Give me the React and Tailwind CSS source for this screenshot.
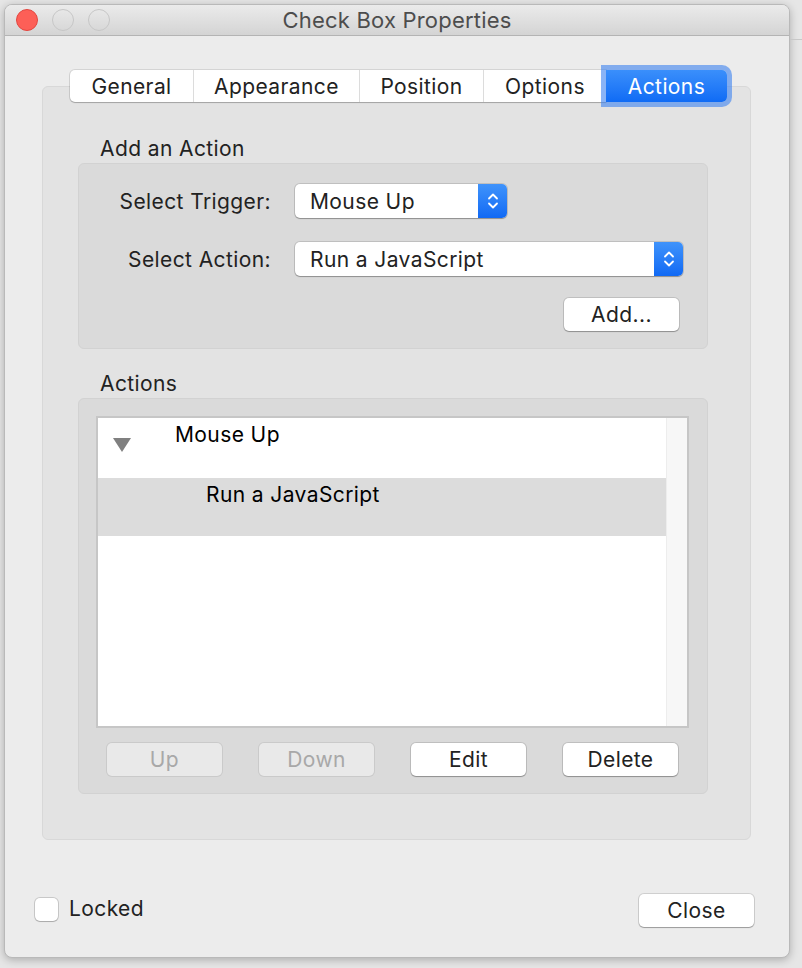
import React from "react";

const font = { fontFamily: "Inter, 'Liberation Sans', sans-serif" };

const Stepper = () => (
  <div className="w-[29px] h-full rounded-r-[5px] bg-gradient-to-b from-[#3f93fb] to-[#1069f4] flex items-center justify-center">
    <svg width="12" height="20" viewBox="0 0 12 20" fill="none" stroke="white" strokeWidth="1.8" strokeLinecap="round" strokeLinejoin="round">
      <path d="M2 7.5 L6 3.5 L10 7.5" />
      <path d="M2 12.5 L6 16.5 L10 12.5" />
    </svg>
  </div>
);

const Popup = ({ value, width }) => (
  <div
    className={`${width} h-[34px] flex bg-white rounded-[5px] shadow-[0_0_0_1px_rgba(0,0,0,0.12),0_1px_1px_rgba(0,0,0,0.25)]`}
  >
    <div className="flex-1 pl-[15px] pt-[1px] flex items-center text-[21px] tracking-[0.4px] text-[#222]">{value}</div>
    <Stepper />
  </div>
);

const Button = ({ label, disabled }) => (
  <div
    className={
      "w-[115px] h-[33px] pt-[1px] rounded-[5px] flex items-center justify-center text-[21px] tracking-[0.4px] " +
      (disabled
        ? "bg-[#e9e9e9] text-[#a8a8a8] shadow-[0_0_0_1px_rgba(0,0,0,0.07)]"
        : "bg-white text-[#222] shadow-[0_0_0_1px_rgba(0,0,0,0.12),0_1px_1px_rgba(0,0,0,0.25)]")
    }
  >
    {label}
  </div>
);

const tabs = [
  { label: "General", w: "w-[123px]" },
  { label: "Appearance", w: "w-[166px]" },
  { label: "Position", w: "w-[124px]" },
  { label: "Options", w: "w-[123px]" },
];

export default function App() {
  return (
    <div className="w-[802px] h-[968px] bg-[#e6e6e6] overflow-hidden" style={font}>
      <div className="flex h-full">
        <div className="ml-[4px] mt-[4px] w-[786px] h-[954px] rounded-[8px] bg-[#ececec] border border-[#b9b9b9] shadow-[0_2px_8px_rgba(0,0,0,0.25)] flex flex-col overflow-hidden">
          {/* title bar */}
          <div className="h-[31px] shrink-0 bg-gradient-to-b from-[#ebebeb] to-[#d4d4d4] border-b border-[#b4b4b4] flex items-center relative">
            <div className="flex items-center gap-[14px] pl-[11px]">
              <div className="w-[22px] h-[22px] rounded-full bg-[#fd5f57] border border-[#e2463f]" />
              <div className="w-[22px] h-[22px] rounded-full border border-[#c6c6c6]" />
              <div className="w-[22px] h-[22px] rounded-full border border-[#c6c6c6]" />
            </div>
            <div className="absolute inset-0 flex items-center justify-center text-[22px] tracking-[0.2px] text-[#4d4d4d] pointer-events-none">
              Check Box Properties
            </div>
          </div>

          {/* tab row */}
          <div className="mt-[34px] ml-[65px] h-[32px] flex relative z-10 text-[21px] tracking-[0.4px]">
            <div className="flex bg-white rounded-l-[5px] shadow-[0_0_0_1px_rgba(0,0,0,0.1),0_1px_1px_rgba(0,0,0,0.2)]">
              {tabs.map((t, i) => (
                <div
                  key={t.label}
                  className={`${t.w} pt-[1px] flex items-center justify-center text-[#222] ${i > 0 ? "border-l border-[#dcdcdc]" : ""}`}
                >
                  {t.label}
                </div>
              ))}
            </div>
            <div className="w-[121px] pt-[1px] rounded-r-[5px] bg-gradient-to-b from-[#3a8ffb] to-[#0f6bf5] text-white flex items-center justify-center shadow-[0_0_0_5px_rgba(60,130,240,0.6)]">
              Actions
            </div>
          </div>

          {/* tab panel */}
          <div className="mt-[-16px] mx-[37px] w-[709px] h-[754px] shrink-0 rounded-[6px] bg-[#e3e3e3] border border-[#d8d8d8] pt-[50px] pl-[35px] text-[21px] tracking-[0.4px]">
            <div className="pl-[22px] h-[24px] leading-[24px] text-[#222] mb-[2px]">Add an Action</div>
            <div className="w-[630px] h-[186px] rounded-[6px] bg-[#dadada] border border-[#d2d2d2] pt-[20px]">
              <div className="flex items-center">
                <div className="w-[192px] pt-[2px] text-right text-[#222]">Select Trigger:</div>
                <div className="ml-[24px]">
                  <Popup value="Mouse Up" width="w-[212px]" />
                </div>
              </div>
              <div className="flex items-center mt-[24px]">
                <div className="w-[192px] pt-[2px] text-right text-[#222]">Select Action:</div>
                <div className="ml-[24px]">
                  <Popup value="Run a JavaScript" width="w-[388px]" />
                </div>
              </div>
              <div className="flex justify-end pr-[28px] mt-[22px]">
                <Button label="Add..." />
              </div>
            </div>

            <div className="pl-[22px] mt-[23px] h-[24px] leading-[24px] text-[#222] mb-[2px]">Actions</div>
            <div className="w-[630px] h-[396px] rounded-[6px] bg-[#dadada] border border-[#d2d2d2] pt-[17px] pl-[17px]">
              <div className="w-[593px] h-[312px] bg-white border-2 border-[#c6c6c6] flex">
                <div className="flex-1">
                  <div className="h-[60px] flex">
                    <div className="w-[77px] pt-[20px] pl-[15px]">
                      <svg width="18" height="14" viewBox="0 0 18 14">
                        <path d="M0 0 H18 L9 14 Z" fill="#808080" />
                      </svg>
                    </div>
                    <div className="pt-[1px] text-black">Mouse Up</div>
                  </div>
                  <div className="h-[58px] bg-[#dcdcdc] pl-[108px] pt-[1px] text-black">
                    Run a JavaScript
                  </div>
                </div>
                <div className="w-[21px] bg-[#f7f7f7] border-l border-[#ededed]" />
              </div>
              <div className="flex gap-[37px] pl-[11px] mt-[15px]">
                <Button label="Up" disabled />
                <Button label="Down" disabled />
                <Button label="Edit" />
                <Button label="Delete" />
              </div>
            </div>
          </div>

          {/* footer */}
          <div className="mt-[54px] pl-[30px] pr-[35px] flex items-center justify-between">
            <div className="flex items-center gap-[11px] mt-[-3px]">
              <div className="w-[23px] h-[23px] rounded-[5px] bg-white shadow-[0_0_0_1px_rgba(0,0,0,0.15),0_1px_1px_rgba(0,0,0,0.15)]" />
              <div className="text-[21px] tracking-[0.4px] text-[#222]">Locked</div>
            </div>
            <Button label="Close" />
          </div>
        </div>
        <div className="flex-1 flex flex-col">
          <div className="h-[40px] border-b border-[#c8c8c8]" />
        </div>
      </div>
    </div>
  );
}
